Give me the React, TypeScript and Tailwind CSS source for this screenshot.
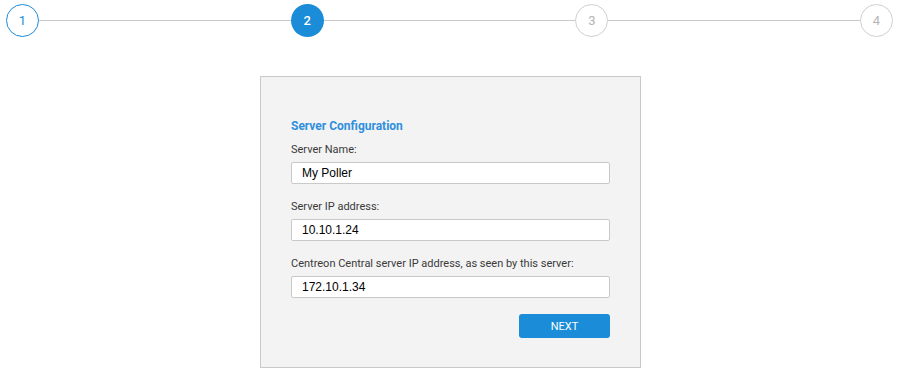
import React from "react";

const steps = [1, 2, 3, 4];

const fields = [
  { label: "Server Name:", value: "My Poller" },
  { label: "Server IP address:", value: "10.10.1.24" },
  {
    label: "Centreon Central server IP address, as seen by this server:",
    value: "172.10.1.34",
  },
];

const StepCircle = ({ n }: { n: number }) => {
  if (n === 1)
    return (
      <div className="w-[33px] h-[33px] shrink-0 rounded-full border border-[#1a8cd8] bg-white flex items-center justify-center text-[13px] text-[#1a8cd8]">
        {n}
      </div>
    );
  if (n === 2)
    return (
      <div className="w-[33px] h-[33px] shrink-0 rounded-full bg-[#1a8cd8] flex items-center justify-center text-[13px] font-medium text-white">
        {n}
      </div>
    );
  return (
    <div className="w-[33px] h-[33px] shrink-0 rounded-full border border-[#cfcfcf] bg-white flex items-center justify-center text-[13px] text-[#b5b5b5]">
      {n}
    </div>
  );
};

export default function App() {
  return (
    <div className="w-full min-h-[375px] bg-white font-['Roboto',sans-serif]">
      <div className="flex items-center px-[6px] pt-[4px]">
        {steps.map((n, i) => (
          <React.Fragment key={n}>
            <StepCircle n={n} />
            {i < steps.length - 1 && <div className="flex-1 h-px bg-[#c9c9c9]"></div>}
          </React.Fragment>
        ))}
      </div>

      <div className="flex justify-center pl-[2px] mt-[39px]">
        <div className="w-[381px] border border-[#c9c9c9] bg-[#f3f3f3] px-[30px] pt-[42px] pb-[29px]">
          <h2 className="text-[12px] leading-[14px] font-bold text-[#2f8fde]">
            Server Configuration
          </h2>
          <div className="mt-[10px]">
            {fields.map((f) => (
              <div key={f.label} className="mb-[16px]">
                <label className="block text-[11px] leading-[14px] text-[#3a3a3a]">
                  {f.label}
                </label>
                <div className="mt-[5px] h-[22px] border border-[#c9c9c9] rounded-[2px] bg-white pl-[10px] flex items-center font-['Liberation_Sans',Arial,sans-serif] text-[12px] text-black">
                  {f.value}
                </div>
              </div>
            ))}
          </div>
          <div className="flex justify-end">
            <button className="w-[91px] h-[24px] rounded-[3px] bg-[#1a8cd8] text-white text-[11px] leading-none">
              NEXT
            </button>
          </div>
        </div>
      </div>
    </div>
  );
}
